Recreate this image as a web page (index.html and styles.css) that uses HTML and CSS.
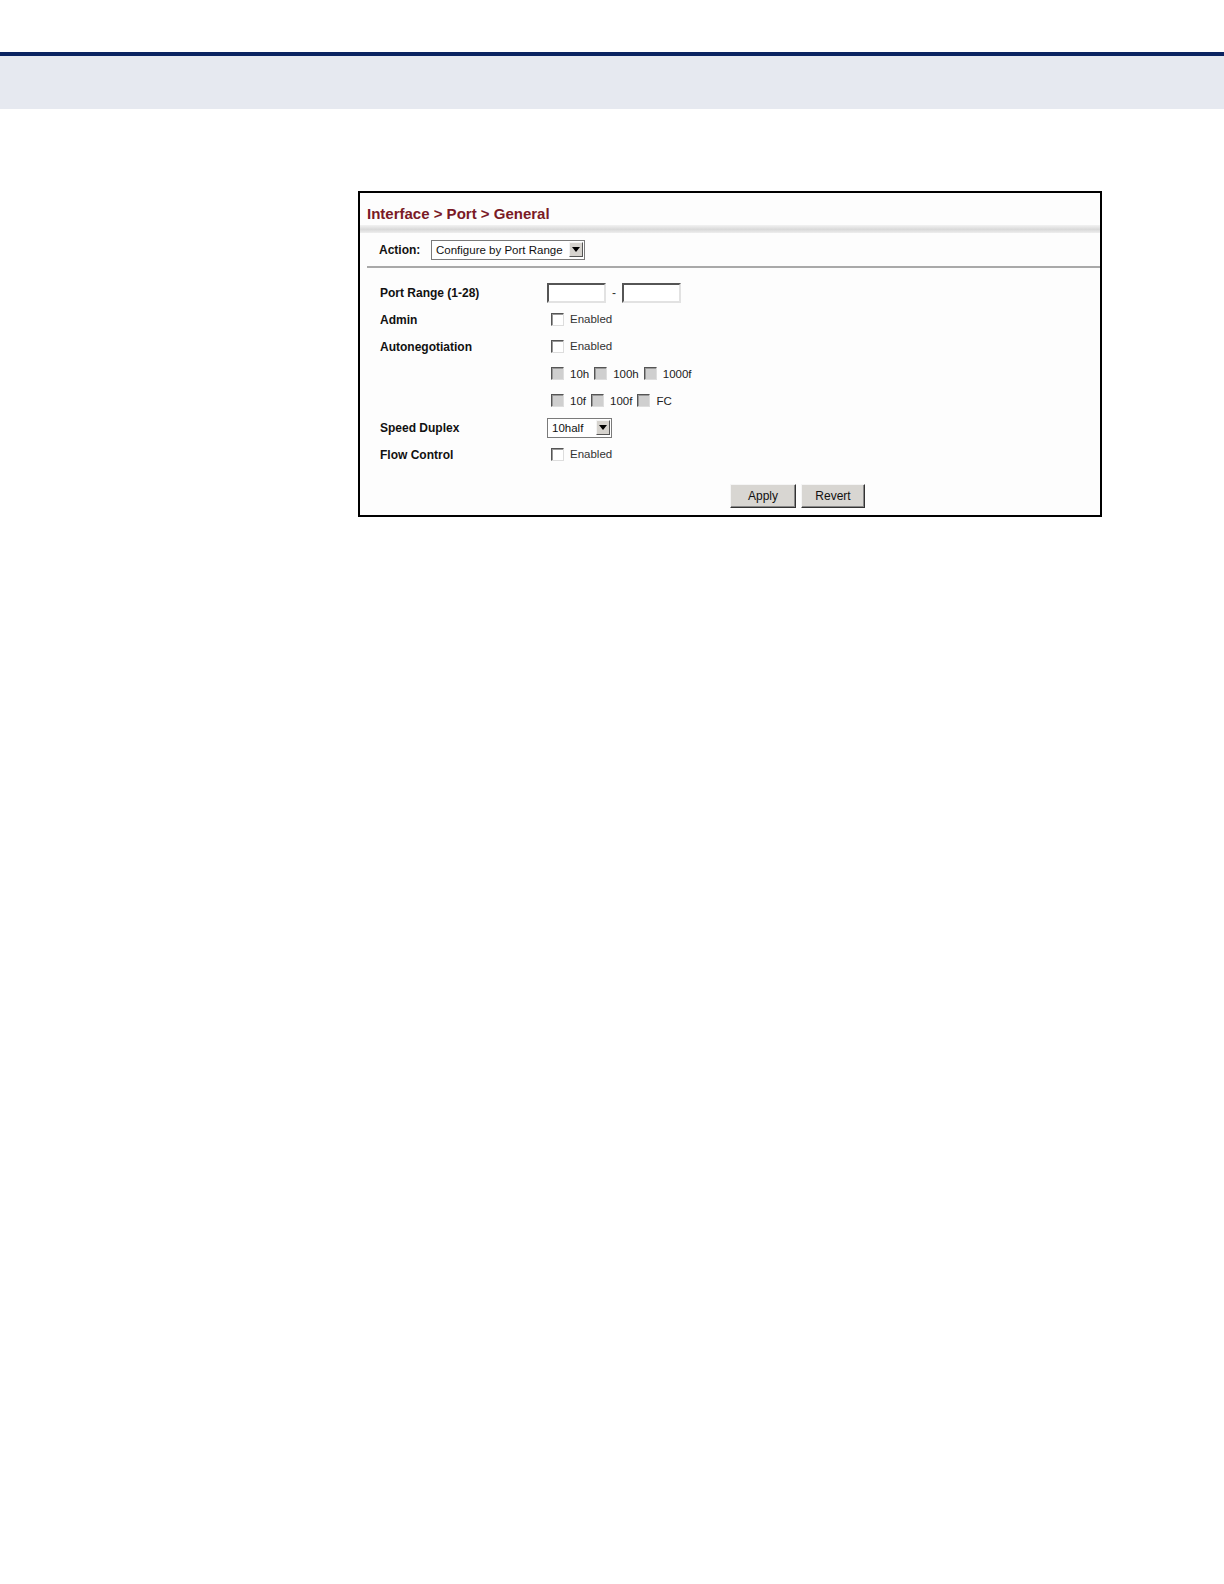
FILE: index.html
```html
<!DOCTYPE html>
<html>
<head>
<meta charset="utf-8">
<link rel="stylesheet" href="styles.css">
</head>
<body>
<div class="header"></div>
<div class="panel">
  <div class="title">Interface &gt; Port &gt; General</div>
  <div class="sep"></div>
  <div class="action">
    <span class="action-label">Action:</span>
    <span class="select select-action"><span class="sel-text">Configure by Port Range</span><span class="arrow"></span></span>
  </div>
  <div class="rule"></div>
  <div class="form">
    <div class="label">Port Range (1-28)</div>
    <div class="ctrl"><span class="input"></span><span class="dash">-</span><span class="input"></span></div>
    <div class="label">Admin</div>
    <div class="ctrl"><span class="cb"></span><span class="opt">Enabled</span></div>
    <div class="label">Autonegotiation</div>
    <div class="ctrl"><span class="cb"></span><span class="opt">Enabled</span></div>
    <div class="label"></div>
    <div class="ctrl"><span class="cb dis"></span><span class="opt dk">10h</span><span class="cb dis"></span><span class="opt dk">100h</span><span class="cb dis"></span><span class="opt dk">1000f</span></div>
    <div class="label"></div>
    <div class="ctrl"><span class="cb dis"></span><span class="opt dk">10f</span><span class="cb dis"></span><span class="opt dk">100f</span><span class="cb dis"></span><span class="opt dk">FC</span></div>
    <div class="label">Speed Duplex</div>
    <div class="ctrl"><span class="select select-speed"><span class="sel-text">10half</span><span class="arrow"></span></span></div>
    <div class="label">Flow Control</div>
    <div class="ctrl"><span class="cb"></span><span class="opt">Enabled</span></div>
  </div>
  <div class="buttons">
    <span class="btn btn-apply">Apply</span>
    <span class="btn btn-revert">Revert</span>
  </div>
</div>
</body>
</html>
```
FILE: styles.css
```css
html, body {
  margin: 0;
  padding: 0;
  background: #ffffff;
}
body {
  font-family: "Liberation Sans", Arial, sans-serif;
  color: #111;
}
.header {
  margin-top: 52px;
  height: 53px;
  border-top: 4px solid #0b2461;
  background: #e6e9f0;
}
.panel {
  margin-top: 82px;
  margin-left: 358px;
  width: 740px;
  height: 322px;
  border: 2px solid #000;
  background: #fdfdfd;
}
.title {
  height: 32px;
  padding-left: 7px;
  box-sizing: border-box;
  padding-top: 13px;
  font-size: 15px;
  font-weight: bold;
  color: #7a1a26;
  line-height: 16px;
}
.sep {
  height: 8px;
  background: linear-gradient(to bottom, #f2f2f2 0%, #d9d9d9 55%, #eeeeee 100%);
}
.action {
  height: 33px;
  display: flex;
  align-items: center;
  padding-left: 19px;
  box-sizing: border-box;
}
.action-label {
  font-size: 12px;
  font-weight: bold;
  width: 52px;
}
.select {
  display: inline-flex;
  align-items: center;
  height: 20px;
  box-sizing: border-box;
  border: 1px solid #7a7a7a;
  background: #fff;
  font-size: 11.5px;
  padding-left: 4px;
  justify-content: space-between;
  padding-right: 1px;
}
.select-action { width: 154px; }
.select-speed { width: 65px; }
.sel-text { white-space: nowrap; color: #111; }
.arrow {
  width: 14px;
  height: 15px;
  box-sizing: border-box;
  background: #d6d3ce;
  border: 1px solid;
  border-color: #f4f4f4 #555 #555 #f4f4f4;
  position: relative;
}
.arrow::after {
  content: "";
  position: absolute;
  left: 2px;
  top: 4px;
  border-left: 4px solid transparent;
  border-right: 4px solid transparent;
  border-top: 5px solid #000;
}
.rule {
  margin-left: 7px;
  height: 2px;
  background: #a9a9a9;
}
.form {
  display: grid;
  grid-template-columns: 167px 1fr;
  grid-auto-rows: 27px;
  padding-top: 11px;
  padding-left: 20px;
}
.label {
  font-size: 12px;
  font-weight: bold;
  display: flex;
  align-items: center;
  color: #111;
}
.ctrl {
  display: flex;
  align-items: center;
}
.input {
  width: 59px;
  height: 20px;
  box-sizing: border-box;
  border: 2px solid;
  border-color: #555 #e2e2e2 #e2e2e2 #555;
  background: #fff;
}
.dash {
  font-size: 12px;
  margin: 0 6px;
  color: #333;
}
.cb {
  width: 13px;
  height: 13px;
  box-sizing: border-box;
  border: 1px solid;
  border-color: #555 #ddd #ddd #555;
  background: #fff;
  margin-left: 4px;
  margin-right: 6px;
  box-shadow: inset 1px 1px 0 #999;
}
.cb.dis {
  background: #cfcfcf;
}
.opt {
  font-size: 11.5px;
  color: #333;
  margin-right: 2px;
  position: relative;
  top: -1px;
}
.opt.dk {
  color: #222;
  margin-right: 1px;
  top: 0;
}
.buttons {
  display: flex;
  gap: 5px;
  margin-left: 370px;
  margin-top: 16px;
}
.btn {
  display: inline-flex;
  align-items: center;
  justify-content: center;
  height: 24px;
  box-sizing: border-box;
  font-size: 12px;
  color: #111;
  background: #d8d6d2;
  border: 1px solid;
  border-color: #f5f5f5 #333 #333 #f5f5f5;
  box-shadow: inset -1px -1px 0 #888;
}
.btn-apply { width: 66px; }
.btn-revert { width: 64px; }
```
